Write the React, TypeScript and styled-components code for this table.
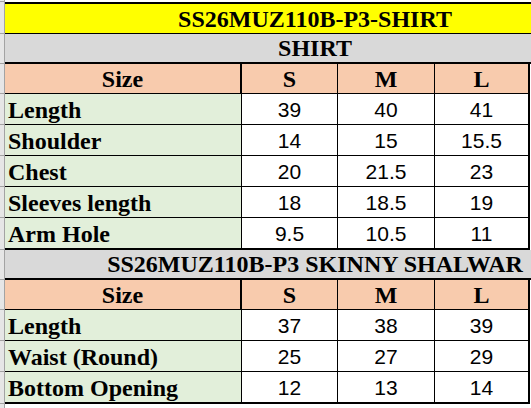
import styled, { createGlobalStyle } from "styled-components";

const GlobalStyle = createGlobalStyle`
  html, body {
    margin: 0;
    padding: 0;
    background: #ffffff;
    overflow: hidden;
  }
`;

const Sheet = styled.div`
  display: flex;
  flex-direction: column;
  width: 531px;
`;

const Row = styled.div<{ $h: number }>`
  display: flex;
  height: ${(p) => p.$h}px;
`;

const Gutter = styled.div`
  flex: 0 0 5px;
  box-sizing: border-box;
  background: #e6e6e6;
  border-right: 1px solid #a3a3a3;
  border-bottom: 1px solid #a3a3a3;
`;

// merged title cells run on past the visible columns, so the text sits right of centre
const Title = styled.div<{ $bg: string; $top?: number; $bottom: number }>`
  flex: 1;
  box-sizing: border-box;
  display: flex;
  align-items: flex-end;
  justify-content: center;
  padding: 0 0 2px 94px;
  background: ${(p) => p.$bg};
  border-top: ${(p) => p.$top ?? 0}px solid #000;
  border-bottom: ${(p) => p.$bottom}px solid #000;
  font: bold 24px/1 "Liberation Serif", "Times New Roman", serif;
  color: #000;
  white-space: nowrap;
`;

const Cell = styled.div<{ $w: number; $bg: string; $bottom: number; $right: number }>`
  flex: 0 0 ${(p) => p.$w}px;
  box-sizing: border-box;
  display: flex;
  align-items: flex-end;
  padding-bottom: 2px;
  background: ${(p) => p.$bg};
  border-right: ${(p) => p.$right}px solid #000;
  border-bottom: ${(p) => p.$bottom}px solid #000;
  color: #000;
  white-space: nowrap;
  overflow: hidden;
`;

const LabelCell = styled(Cell)`
  padding-left: 3px;
  font: bold 24px/1 "Liberation Serif", "Times New Roman", serif;
`;

const HeadCell = styled(Cell)`
  justify-content: center;
  font: bold 24px/1 "Liberation Serif", "Times New Roman", serif;
`;

const NumCell = styled(Cell)`
  justify-content: center;
  padding-bottom: 4px;
  font: 21px/1 "Liberation Sans", Arial, sans-serif;
`;

const Filler = styled.div`
  flex: 1;
`;

const PEACH = "#f8cbad";
const GREEN = "#e2efda";
const widths = [237, 96, 97, 95];

interface Measure {
  label: string;
  values: string[];
}

const shirt: Measure[] = [
  { label: "Length", values: ["39", "40", "41"] },
  { label: "Shoulder", values: ["14", "15", "15.5"] },
  { label: "Chest", values: ["20", "21.5", "23"] },
  { label: "Sleeves length", values: ["18", "18.5", "19"] },
  { label: "Arm Hole", values: ["9.5", "10.5", "11"] },
];

const shalwar: Measure[] = [
  { label: "Length", values: ["37", "38", "39"] },
  { label: "Waist (Round)", values: ["25", "27", "29"] },
  { label: "Bottom Opening", values: ["12", "13", "14"] },
];

function HeaderRow() {
  return (
    <Row $h={30}>
      <Gutter />
      <HeadCell $w={widths[0]} $bg={PEACH} $bottom={1} $right={2}>
        Size
      </HeadCell>
      <HeadCell $w={widths[1]} $bg={PEACH} $bottom={1} $right={1}>
        S
      </HeadCell>
      <HeadCell $w={widths[2]} $bg={PEACH} $bottom={1} $right={1}>
        M
      </HeadCell>
      <HeadCell $w={widths[3]} $bg={PEACH} $bottom={1} $right={2}>
        L
      </HeadCell>
      <Filler />
    </Row>
  );
}

function MeasureRows({ rows }: { rows: Measure[] }) {
  return (
    <>
      {rows.map((r, i) => {
        const last = i === rows.length - 1;
        const b = last ? 2 : 1;
        return (
          <Row key={r.label} $h={30 + b}>
            <Gutter />
            <LabelCell $w={widths[0]} $bg={GREEN} $bottom={b} $right={1}>
              {r.label}
            </LabelCell>
            {r.values.map((v, j) => (
              <NumCell
                key={j}
                $w={widths[j + 1]}
                $bg="#ffffff"
                $bottom={b}
                $right={j === 2 ? 2 : 1}
              >
                {v}
              </NumCell>
            ))}
            <Filler />
          </Row>
        );
      })}
    </>
  );
}

export default function App() {
  return (
    <>
      <GlobalStyle />
      <Sheet>
        <Row $h={2}>
          <Gutter />
        </Row>
        <Row $h={32}>
          <Gutter />
          <Title $bg="#ffff00" $top={2} $bottom={1}>
            SS26MUZ110B-P3-SHIRT
          </Title>
        </Row>
        <Row $h={30}>
          <Gutter />
          <Title $bg="#d9d9d9" $bottom={2}>
            SHIRT
          </Title>
        </Row>
        <HeaderRow />
        <MeasureRows rows={shirt} />
        <Row $h={30}>
          <Gutter />
          <Title $bg="#d9d9d9" $bottom={2}>
            SS26MUZ110B-P3 SKINNY SHALWAR
          </Title>
        </Row>
        <HeaderRow />
        <MeasureRows rows={shalwar} />
        <Row $h={6}>
          <Gutter />
        </Row>
      </Sheet>
    </>
  );
}
